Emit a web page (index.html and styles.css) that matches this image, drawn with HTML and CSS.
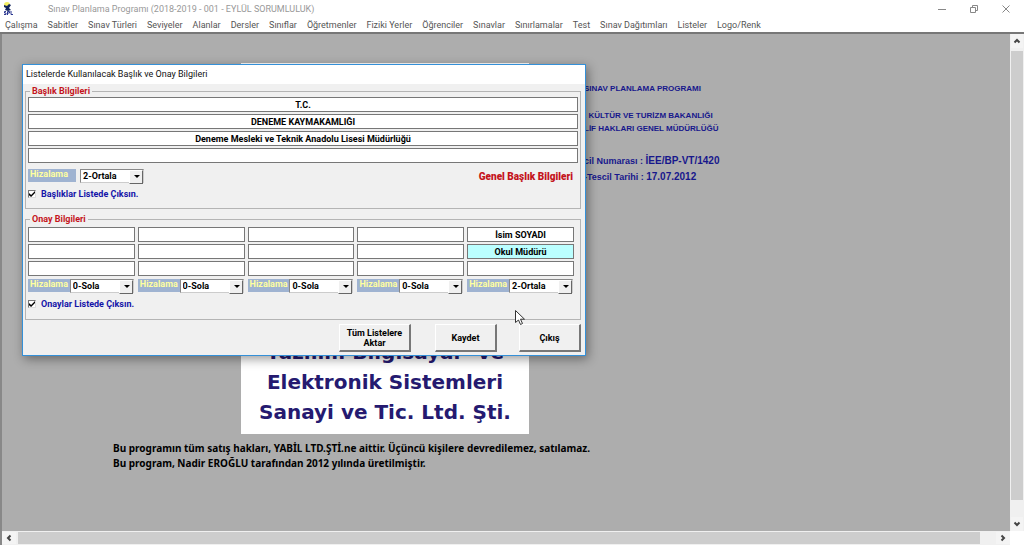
FILE: index.html
```html
<!DOCTYPE html>
<html lang="tr">
<head>
<meta charset="utf-8">
<title>Sınav Planlama Programı</title>
<link rel="stylesheet" href="styles.css">
</head>
<body>
<header class="titlebar">
  <svg class="app-icon" width="12" height="14" viewBox="0 0 12 14" aria-hidden="true">
    <circle cx="4" cy="3" r="3" fill="#f4ef62"/>
    <path d="M1 3l3 1 2-2 2 1-2 3 2 2-3 1-3-1 1-2-2-1z" fill="#12245c"/>
    <path d="M3 9.500H1.500v1.500h1.500v1.500H1M4.500 13V9.500h2V11h-2M8 9v3.500h2" fill="none" stroke="#2b3790"/>
  </svg>
  <h1 class="app-title">Sınav Planlama Programı (2018-2019 - 001 - EYLÜL SORUMLULUK)</h1>
  <div class="window-controls">
    <button type="button" aria-label="Simge durumuna küçült"><svg width="10" height="10" viewBox="0 0 10 10"><path d="M1 5.500h8"/></svg></button>
    <button type="button" aria-label="Önceki boyut"><svg width="10" height="10" viewBox="0 0 10 10"><path d="M1.500 3.500h5v5h-5zM3.500 3.500v-2h5v5h-2"/></svg></button>
    <button type="button" aria-label="Kapat"><svg width="10" height="10" viewBox="0 0 10 10"><path d="M1.500 1.500l7 7M8.500 1.500l-7 7"/></svg></button>
  </div>
</header>
<nav class="menubar">
  <a href="#">Çalışma</a><a href="#">Sabitler</a><a href="#">Sınav Türleri</a><a href="#">Seviyeler</a><a href="#">Alanlar</a><a href="#">Dersler</a><a href="#">Sınıflar</a><a href="#">Öğretmenler</a><a href="#">Fiziki Yerler</a><a href="#">Öğrenciler</a><a href="#">Sınavlar</a><a href="#">Sınırlamalar</a><a href="#">Test</a><a href="#">Sınav Dağıtımları</a><a href="#">Listeler</a><a href="#">Logo/Renk</a>
</nav>
<main class="workspace">
  <div class="canvas">
    <div class="intro">
      <div class="company"><p>Yazılım Bilgisayar&nbsp; ve</p><p>Elektronik Sistemleri</p><p>Sanayi ve Tic. Ltd. Şti.</p></div>
      <div class="registry">
        <p>SINAV PLANLAMA PROGRAMI</p>
        <div class="ministry"><p>. KÜLTÜR VE TURİZM BAKANLIĞI</p><p>LİF HAKLARI GENEL MÜDÜRLÜĞÜ</p></div>
        <p class="record">cil Numarası : <strong>İEE/BP-VT/1420</strong></p>
        <p class="record">-Tescil Tarihi : <strong>17.07.2012</strong></p>
      </div>
    </div>
    <div class="rights">
      <p>Bu programın tüm satış hakları, YABİL LTD.ŞTİ.ne aittir. Üçüncü kişilere devredilemez, satılamaz.</p>
      <p>Bu program, Nadir EROĞLU tarafından 2012 yılında üretilmiştir.</p>
    </div>
  </div>
  <div class="scroll vertical">
    <button type="button" aria-label="Yukarı"><svg width="8" height="8" viewBox="0 0 8 8"><path d="M1.500 5.500L4 3l2.500 2.500"/></svg></button>
    <div class="thumb"></div>
    <button type="button" aria-label="Aşağı"><svg width="8" height="8" viewBox="0 0 8 8"><path d="M1.500 2.500L4 5l2.500-2.500"/></svg></button>
  </div>
  <div class="scroll horizontal">
    <button type="button" aria-label="Sola"><svg width="8" height="8" viewBox="0 0 8 8"><path d="M5.500 1.500L3 4l2.500 2.500"/></svg></button>
    <div class="thumb"></div>
    <button type="button" aria-label="Sağa"><svg width="8" height="8" viewBox="0 0 8 8"><path d="M2.500 1.500L5 4 2.500 6.500"/></svg></button>
  </div>
</main>

<form class="dialog" role="dialog" aria-labelledby="dialog-title">
  <h2 class="dialog-title" id="dialog-title">Listelerde Kullanılacak Başlık ve Onay Bilgileri</h2>
  <div class="dialog-body">
    <fieldset class="group headings">
      <legend>Başlık Bilgileri</legend>
      <div class="lines">
        <input type="text" aria-label="Başlık 1" value="T.C.">
        <input type="text" aria-label="Başlık 2" value="DENEME KAYMAKAMLIĞI">
        <input type="text" aria-label="Başlık 3" value="Deneme Mesleki ve Teknik Anadolu Lisesi Müdürlüğü">
        <input type="text" aria-label="Başlık 4" value="">
      </div>
      <div class="heading-options">
        <div class="align"><label for="a0">Hizalama</label><span class="drop"><select id="a0"><option>2-Ortala</option></select></span></div>
        <strong class="general">Genel Başlık Bilgileri</strong>
      </div>
      <label class="check"><input type="checkbox" checked>Başlıklar Listede Çıksın.</label>
    </fieldset>
    <fieldset class="group approvals">
      <legend>Onay Bilgileri</legend>
      <div class="approval-grid">
        <div class="approver"><input type="text" aria-label="Onay 1 isim"><input type="text" aria-label="Onay 1 unvan"><input type="text" aria-label="Onay 1 ek">
          <div class="align"><label for="a1">Hizalama</label><span class="drop"><select id="a1"><option>0-Sola</option></select></span></div></div>
        <div class="approver"><input type="text" aria-label="Onay 2 isim"><input type="text" aria-label="Onay 2 unvan"><input type="text" aria-label="Onay 2 ek">
          <div class="align"><label for="a2">Hizalama</label><span class="drop"><select id="a2"><option>0-Sola</option></select></span></div></div>
        <div class="approver"><input type="text" aria-label="Onay 3 isim"><input type="text" aria-label="Onay 3 unvan"><input type="text" aria-label="Onay 3 ek">
          <div class="align"><label for="a3">Hizalama</label><span class="drop"><select id="a3"><option>0-Sola</option></select></span></div></div>
        <div class="approver"><input type="text" aria-label="Onay 4 isim"><input type="text" aria-label="Onay 4 unvan"><input type="text" aria-label="Onay 4 ek">
          <div class="align"><label for="a4">Hizalama</label><span class="drop"><select id="a4"><option>0-Sola</option></select></span></div></div>
        <div class="approver"><input type="text" aria-label="Onay 5 isim" value="İsim SOYADI"><input type="text" class="active" aria-label="Onay 5 unvan" value="Okul Müdürü"><input type="text" aria-label="Onay 5 ek">
          <div class="align"><label for="a5">Hizalama</label><span class="drop"><select id="a5"><option>2-Ortala</option></select></span></div></div>
      </div>
      <label class="check"><input type="checkbox" checked>Onaylar Listede Çıksın.</label>
    </fieldset>
    <div class="actions">
      <button type="button" class="wide">Tüm Listelere Aktar</button>
      <button type="button">Kaydet</button>
      <button type="button">Çıkış</button>
    </div>
  </div>
</form>
<svg class="pointer" width="10" height="16" viewBox="0 0 10 16" aria-hidden="true"><path d="M.5.5v12l3-2.500 2 4.500 2-1-2-4.300h4z" fill="#fff" stroke="#333"/></svg>
</body>
</html>
```

FILE: styles.css
```css
* { box-sizing: border-box; }
body {
  margin: 0;
  height: 100vh;
  display: flex;
  flex-direction: column;
  overflow: hidden;
  background: #fff;
  font: bold 9px/12px Roboto, sans-serif;
}
h1, h2, p { margin: 0; }
button, input, select { font: inherit; margin: 0; }

.titlebar {
  display: flex;
  align-items: center;
  height: 17px;
  padding-left: 3px;
}
.app-title {
  flex: 1;
  margin-left: 33px;
  font: 9px/16px Roboto, sans-serif;
  color: #999;
}
.window-controls { display: flex; padding-right: 2px; }
.window-controls button {
  display: grid;
  place-items: center;
  width: 32px;
  height: 16px;
  padding: 0;
  border: 0;
  background: none;
}
.window-controls svg { fill: none; stroke: #888; }

.menubar {
  display: flex;
  gap: 10px;
  height: 17px;
  padding-left: 5px;
  border-bottom: 2px solid #777;
}
.menubar a {
  font: 9px/16px Roboto, sans-serif;
  color: #555;
  text-decoration: none;
  white-space: nowrap;
}

.workspace {
  flex: 1;
  min-height: 0;
  display: grid;
  grid-template: 1fr 14px / 1fr 14px;
  border-left: 2px solid #888;
}
.canvas {
  overflow: hidden;
  padding-top: 29px;
  background: #adadad;
}
.intro {
  display: flex;
  gap: 55px;
  padding-left: 239px;
}
.company {
  display: flex;
  flex-direction: column;
  justify-content: flex-end;
  width: 288px;
  height: 371px;
  padding-bottom: 7px;
  background: #fff;
  color: #251a70;
  font: bold 20px/30px "DejaVu Sans", sans-serif;
  text-align: center;
}
.registry {
  padding-top: 19px;
  font: bold 8px/13px "Liberation Sans", sans-serif;
  color: #17178c;
}
.ministry { margin: 14px 0 18px; }
.record { font-size: 9px; line-height: 15px; }
.record strong { font-size: 10px; }
.rights {
  padding: 7px 0 0 111px;
  font: bold 10px/15px "Noto Sans", sans-serif;
  color: #000;
}

.scroll { display: flex; background: #f0f0f0; }
.scroll button {
  display: grid;
  place-items: center;
  width: 14px;
  height: 14px;
  padding: 0;
  border: 0;
  background: #f4f4f4;
}
.scroll svg { fill: none; stroke: #444; stroke-width: 2; }
.thumb { background: #cdcdcd; }
.vertical { flex-direction: column; justify-content: space-between; padding: 0 1px; }
.vertical button { width: 12px; }
.vertical .thumb { flex: 1; margin: 3px 0 17px; }
.horizontal { grid-column: 1; padding: 1px 0; }
.horizontal button { height: 12px; }
.horizontal .thumb { flex: 1; margin: 0 16px 0 2px; }

/* Dialog window floating over the workspace */
.dialog {
  position: absolute;
  left: 22px;
  top: 64px;
  width: 564px;
  border: 1px solid #3490d8;
  background: #f0f0f0;
  box-shadow: 2px 3px 10px rgba(0, 0, 0, .4);
}
.dialog-title {
  height: 19px;
  padding-left: 3px;
  background: #fff;
  font: 9px/18px Roboto, sans-serif;
  color: #111;
}
.dialog-body { padding: 1px 4px 3px 2px; }
.group {
  min-width: 0;
  margin: 0;
  padding: 0 2px;
  border: 1px solid #b4b4b4;
}
.group legend {
  margin-left: 2px;
  padding: 0 2px;
  line-height: 12px;
  color: #c4141c;
}
.headings { height: 124px; }
.approvals { height: 107px; margin-top: 4px; }
.lines { display: grid; gap: 2px; }
input[type="text"] {
  width: 100%;
  min-width: 0;
  height: 15px;
  padding: 0 2px;
  border: 1px solid #777;
  border-radius: 0;
  background: #fff;
  color: #000;
  text-align: center;
}
input[type="text"].active { background: #bff; }
.heading-options {
  display: flex;
  justify-content: space-between;
  margin-top: 6px;
}
.general {
  padding-right: 5px;
  font-size: 10px;
  line-height: 16px;
  color: #c4141c;
}
.align { display: flex; }
.align label {
  flex: 1;
  min-width: 0;
  height: 13px;
  padding-left: 2px;
  background: #9fb3d1;
  color: #ffffa0;
  line-height: 11px;
}
.headings .align label { flex: none; width: 48px; margin-right: 4px; }
.drop { position: relative; width: 64px; height: 14px; }
.drop select {
  appearance: none;
  display: block;
  width: 100%;
  height: 100%;
  padding: 0 0 0 2px;
  border: 1px solid #888;
  border-right-color: #ccc;
  border-bottom-color: #ccc;
  border-radius: 0;
  background: #fff;
  color: #000;
}
.drop::before {
  content: "";
  position: absolute;
  right: 1px;
  top: 1px;
  width: 12px;
  height: 12px;
  border: 1px solid #fff;
  border-right-color: #666;
  border-bottom-color: #666;
  background: #f0f0f0;
  pointer-events: none;
}
.drop::after {
  content: "";
  position: absolute;
  right: 4px;
  top: 6px;
  border: 3px solid transparent;
  border-top-color: #000;
  border-bottom-width: 0;
  pointer-events: none;
}
.check {
  display: flex;
  align-items: center;
  gap: 5px;
  margin-top: 3px;
  color: #1414a8;
}
.check input {
  appearance: none;
  width: 8px;
  height: 8px;
  border: 1px solid #777;
  border-right-color: #ddd;
  border-bottom-color: #ddd;
  background: #fff;
}
.check input:checked::before {
  content: "";
  display: block;
  width: 6px;
  height: 6px;
  background: #000;
  clip-path: polygon(0 35%, 35% 65%, 100% 0, 100% 35%, 35% 100%, 0 70%);
}
.approval-grid {
  display: grid;
  grid-template-columns: repeat(5, minmax(0, 1fr));
  gap: 3px;
  padding: 2px 4px 0 0;
}
.approver { display: grid; gap: 2px; }
.approver .align { margin-top: 1px; padding-right: 1px; }
.approvals .check { margin-top: 5px; }
.actions {
  display: flex;
  justify-content: flex-end;
  margin-top: 4px;
}
.actions button {
  width: 62px;
  height: 28px;
  margin-left: 22px;
  padding: 0 4px;
  border: 1px solid #fff;
  border-right: 2px solid #777;
  border-bottom: 2px solid #777;
  background: #f0f0f0;
  color: #000;
  line-height: 10px;
}
.actions .wide { width: 72px; margin-right: 2px; padding: 0 2px; }

.pointer { position: absolute; left: 515px; top: 310px; }
```
